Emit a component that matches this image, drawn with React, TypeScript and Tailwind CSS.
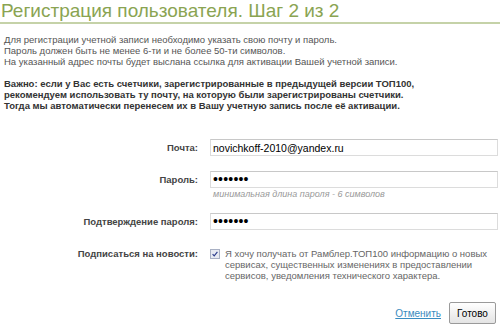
export default function App() {
  return (
    <div
      className="w-[500px] h-[324px] overflow-hidden bg-white"
      style={{ fontFamily: '"Liberation Sans", Arial, sans-serif' }}
    >
      <h1 className="text-[19px] leading-[20px] text-[#8aa452] pl-[1px] pt-[1px] pb-[1px] border-b-2 border-[#c5d2a8]">
        Регистрация пользователя. Шаг 2 из 2
      </h1>

      <div className="pl-[4px] pt-[10px] text-[9.5px] leading-[11px] text-[#555]">
        <p>Для регистрации учетной записи необходимо указать свою почту и пароль.</p>
        <p>Пароль должен быть не менее 6-ти и не более 50-ти символов.</p>
        <p>На указанный адрес почты будет выслана ссылка для активации Вашей учетной записи.</p>
      </div>

      <p className="pl-[4px] pt-[11px] text-[9.5px] leading-[11px] font-bold text-[#333]">
        Важно: если у Вас есть счетчики, зарегистрированные в предыдущей версии ТОП100,
        <br />
        рекомендуем использовать ту почту, на которую были зарегистрированы счетчики.
        <br />
        Тогда мы автоматически перенесем их в Вашу учетную запись после её активации.
      </p>

      <div className="mt-[28px] grid grid-cols-[198px_1fr] gap-x-[12px] pr-[2px] text-[9.5px] text-[#444]">
        <label className="font-bold text-right leading-[17px]">Почта:</label>
        <input
          readOnly
          value="novichkoff-2010@yandex.ru"
          className="h-[17px] w-full border border-[#dcdcdc] border-t-[#c8c8c8] px-[2px] text-[10.5px] text-black outline-none"
        />

        <label className="mt-[15px] font-bold text-right leading-[17px]">Пароль:</label>
        <div className="mt-[15px]">
          <div className="h-[17px] w-full overflow-hidden border border-[#dcdcdc] border-t-[#c8c8c8] px-[2px] text-[14px] leading-[15px] tracking-[0.2px] text-black">
            •••••••
          </div>
          <div className="pl-[3px] pt-[1px] text-[9px] italic text-[#999] leading-[11px]">
            минимальная длина пароля - 6 символов
          </div>
        </div>

        <label className="mt-[13px] font-bold text-right leading-[17px]">Подтверждение пароля:</label>
        <div className="mt-[13px] h-[17px] w-full overflow-hidden border border-[#dcdcdc] border-t-[#c8c8c8] px-[2px] text-[14px] leading-[15px] tracking-[0.2px] text-black">
          •••••••
        </div>

        <label className="mt-[18px] font-bold text-right leading-[11px]">Подписаться на новости:</label>
        <div className="mt-[18px] flex gap-[5px]">
          <span className="mt-[1px] flex h-[10px] w-[10px] shrink-0 items-center justify-center border border-[#a9b1c4] bg-[#e7eaf2]">
            <svg viewBox="0 0 10 10" className="h-[8px] w-[8px]">
              <path d="M2 5.2 L4 7.4 L8 2.4" fill="none" stroke="#2b3c8c" strokeWidth="1.4" />
            </svg>
          </span>
          <p className="text-[9.5px] leading-[11px] text-[#666]">
            Я хочу получать от Рамблер.ТОП100 информацию о новых
            <br />
            сервисах, существенных изменениях в предоставлении
            <br />
            сервисов, уведомления технического характера.
          </p>
        </div>
      </div>

      <div className="mt-[21px] flex items-center justify-end gap-[8px] pr-[4px]">
        <a href="#" className="text-[10px] text-[#3a8cc0] underline">Отменить</a>
        <button className="h-[22px] w-[47px] rounded-[2px] border border-[#9a9a9a] bg-gradient-to-b from-white to-[#e4e4e4] text-[10px] text-black">
          Готово
        </button>
      </div>
    </div>
  );
}
